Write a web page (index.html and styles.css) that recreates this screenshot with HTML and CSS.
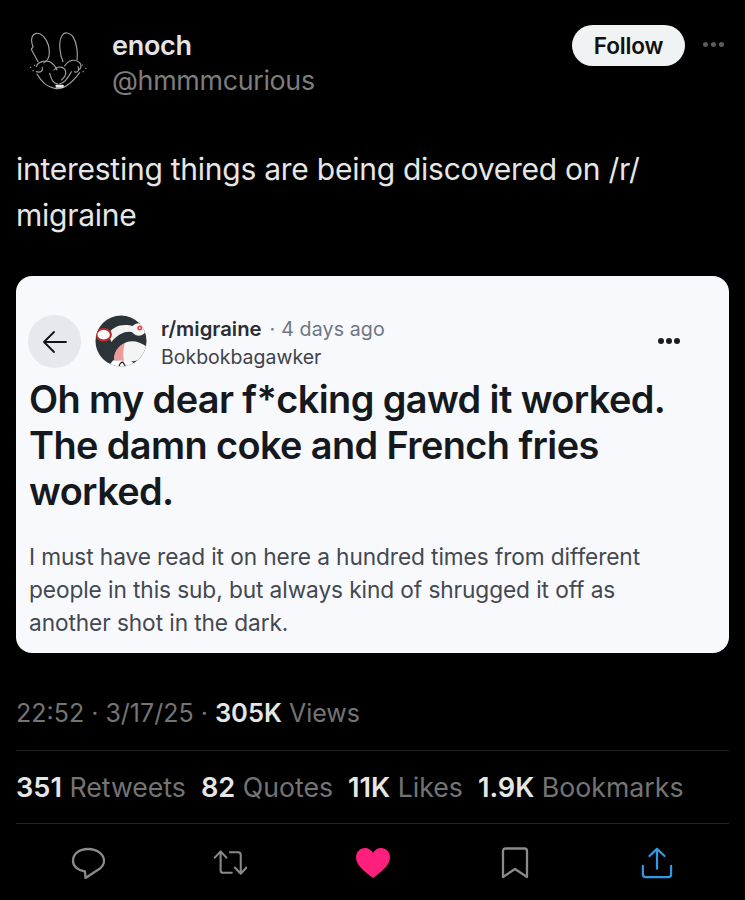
FILE: index.html
```html
<!DOCTYPE html>
<html lang="en">
<head>
<meta charset="utf-8">
<title>enoch on X</title>
<link rel="stylesheet" href="styles.css">
</head>
<body>
<main class="tweet">
  <header class="head">
    <svg class="avatar" viewBox="85 60 180 180" fill="none" stroke="#a0a0a0" stroke-width="3.500" stroke-linecap="round">
      <path d="M132 158C150 150 152 130 146 105 140 85 125 68 110 70 98 72 93 85 97 100L100 110 95 118C103 135 110 145 115 155"/>
      <path d="M190 155C180 130 175 95 188 75 195 66 210 66 220 80 232 100 235 130 232 150"/>
      <path d="M110 170C115 155 135 150 150 155 160 160 168 170 172 180"/>
      <path d="M195 168C205 150 225 145 240 158 245 165 245 172 240 178"/>
      <path d="M163 180C175 165 195 170 198 185 200 200 190 205 185 210"/>
      <path d="M110 185C125 190 130 180 128 172M225 185C235 190 240 178 235 170"/>
      <path d="M112 192C125 215 145 232 165 235 185 240 210 228 240 188"/>
      <path d="M150 190C155 210 165 222 175 222M215 185C205 205 195 218 180 222"/>
      <path d="M92 172h1M100 182h1M104 166h1M248 165h1M258 175h1M250 185h1"/>
      <rect class="tooth" x="168" y="224" width="24" height="9" rx="2"/>
    </svg>
    <div class="names">
      <div class="name">enoch</div>
      <div class="handle">@hmmmcurious</div>
    </div>
    <button class="follow" type="button">Follow</button>
    <div class="more"><i></i><i></i><i></i></div>
  </header>

  <p class="body">interesting things are being discovered on /r/<br>migraine</p>

  <article class="card">
    <div class="meta">
      <div class="back">
        <svg viewBox="0 0 24 24" fill="none" stroke="#111317" stroke-width="1.800" stroke-linecap="round" stroke-linejoin="round"><path d="M23 12H1M11 2 1 12l10 10"/></svg>
      </div>
      <svg class="sub-icon" viewBox="0 0 54 54">
        <defs><clipPath id="disc"><circle cx="27" cy="27" r="26.500"/></clipPath></defs>
        <g clip-path="url(#disc)">
          <rect width="54" height="54" fill="#2c3439"/>
          <path d="M14 20C18 11 30 8 42 12L44 20C36 15 26 17 17 28z" fill="#f2f2f2"/>
          <path d="M20 46C20 38 25 32 33 28 40 26 47 28 54 33L52 44C44 49 32 50 20 46z" fill="#f4f4f4"/>
          <path d="M20 47C19 39 24 32 31 29 29 35 29 42 30 48z" fill="#ef9a9a"/>
          <path d="M13 54L19 47 38 48 44 54z" fill="#fff"/>
          <path d="M25 53c1-3 3-4 4-4l3 5" fill="none" stroke="#222" stroke-width="1.200"/>
          <ellipse cx="9" cy="20.500" rx="7.500" ry="6" fill="#fff" stroke="#c02a2a" stroke-width="2.200"/>
          <ellipse cx="45.500" cy="15" rx="7.500" ry="6.500" fill="#f5f5f5"/>
          <circle cx="46.500" cy="13.500" r="2.600" fill="#e0474c"/>
          <circle cx="46.500" cy="13.500" r="1" fill="#f8dcdc"/>
        </g>
      </svg>
      <div class="sub-text">
        <div class="sub-line"><b>r/migraine</b><span class="dot">·</span><span class="ago">4 days ago</span></div>
        <div class="author">Bokbokbagawker</div>
      </div>
      <div class="card-more"><i></i><i></i><i></i></div>
    </div>
    <h1 class="title">Oh my dear f*cking gawd it worked. The damn coke and French fries worked.</h1>
    <p class="excerpt">I must have read it on here a hundred times from different people in this sub, but always kind of shrugged it off as another shot in the dark.</p>
  </article>

  <div class="time">22:52 · 3/17/25 · <b>305K</b> Views</div>

  <div class="stats">
    <span><b>351</b> Retweets</span>
    <span><b>82</b> Quotes</span>
    <span><b>11K</b> Likes</span>
    <span><b>1.9K</b> Bookmarks</span>
  </div>

  <footer class="actions">
    <svg class="act" viewBox="0 0 34 32" fill="none" stroke="#8a8a8a" stroke-width="2.300" stroke-linejoin="round"><path d="M17 2C26 2 33 7 33 14c0 3-1.500 5.500-4 7.500L14.500 31l-.5-6.500C7 23.500 2 19.500 2 14 2 7 8 2 17 2z"/></svg>
    <svg class="act" viewBox="0 0 38 30" fill="none" stroke="#8a8a8a" stroke-width="2.300" stroke-linecap="round" stroke-linejoin="round"><path d="M2 9l6.500-7L15 9M8.500 3v20c0 2 1 3 3 3H21M19 3h9c2 0 3 1 3 3v20M24.500 20l6.500 7 6.500-7"/></svg>
    <svg class="act" viewBox="0 0 34 30"><path fill="#ff1f7d" d="M17 30C11 25.500 0 18 0 9.500 0 4 4 0 9 0c3.500 0 6.500 2 8 5 1.500-3 4.500-5 8-5 5 0 9 4 9 9.500C34 18 23 25.500 17 30z"/></svg>
    <svg class="act" viewBox="0 0 28 32" fill="none" stroke="#8a8a8a" stroke-width="2.300" stroke-linejoin="round"><path d="M2 30V4c0-1.500 1-2.500 2.500-2.500h19C25 1.500 26 2.500 26 4v26L14 22z"/></svg>
    <svg class="act" viewBox="0 0 34 34" fill="none" stroke="#2f9be6" stroke-width="2.300" stroke-linecap="round" stroke-linejoin="round"><path d="M17 23V2M9 9.500 17 2l8 7.500M2 20v9c0 2 1 3 3 3h24c2 0 3-1 3-3v-9"/></svg>
  </footer>
</main>
</body>
</html>
```

FILE: styles.css
```css
* { box-sizing: border-box; }
html, body { margin: 0; background: #000; }
body { width: 745px; height: 900px; overflow: hidden; font-family: Inter, "Liberation Sans", sans-serif; color: #e8e8e8; }
.tweet { padding: 0 16px; }

.head { display: flex; align-items: flex-start; padding-top: 29px; height: 140px; }
.avatar { width: 60px; height: 60px; margin: 1px 0 0 12px; flex: none; }
.tooth { fill: #e8e8e8; stroke: none; }
.names { margin-left: 24px; flex: 1; }
.name { font-size: 27px; line-height: 34px; font-weight: 600; color: #e4e4e4; letter-spacing: -0.3px; }
.handle { font-size: 26.800px; line-height: 34px; color: #7d7d7d; letter-spacing: -0.3px; }
.follow { width: 113px; height: 41px; margin-top: -4px; border: 0; border-radius: 21px; background: #eff3f4; color: #111; font: 600 22.600px Inter, sans-serif; letter-spacing: -0.2px; padding: 0; }
.more { display: flex; gap: 3px; margin: 13px 5px 0 18px; }
.more i { width: 5px; height: 5px; border-radius: 50%; background: #5c5c5c; }

.body { margin: 0; font-size: 30px; line-height: 46px; height: 136px; padding-top: 6px; color: #e6e6e6; letter-spacing: -0.25px; }

.card { width: 713px; height: 377px; background: #f7f9fc; border-radius: 16px; padding: 39px 12px 0 12px; color: #1a1c20; }
.meta { display: flex; align-items: flex-start; height: 56px; }
.back { width: 53px; height: 53px; border-radius: 50%; background: #e5e9ee; display: flex; align-items: center; justify-content: center; flex: none; }
.back svg { width: 24px; height: 24px; }
.sub-icon { width: 52px; height: 52px; margin: 0 0 0 14px; flex: none; }
.sub-text { margin-left: 14px; flex: 1; }
.sub-line { font-size: 19.600px; line-height: 30px; margin-top: -1px; }
.sub-line b { font-size: 20.300px; font-weight: 600; color: #2a2d33; }
.dot { color: #6f7680; margin: 0 6px 0 8px; }
.ago { color: #6f7680; letter-spacing: .1px; }
.author { font-size: 19.500px; line-height: 24px; color: #3f4349; margin-top: 1px; }
.card-more { display: flex; gap: 2px; margin: 23px 37px 0 0; }
.card-more i { width: 6px; height: 6px; border-radius: 50%; background: #1a1c20; }

.title { margin: 5px 0 0 1px; font-size: 37.900px; line-height: 46px; font-weight: 600; color: #15181c; letter-spacing: -0.6px; }
.excerpt { margin: 26px 0 0 1px; max-width: 640px; font-size: 22.700px; line-height: 33px; color: #44484f; letter-spacing: -0.1px; }

.time { margin-top: 43px; font-size: 25px; line-height: 34px; color: #747474; }
.time b { font-size: 25.500px; }
.time b, .stats b { font-weight: 600; color: #e6e6e6; }
.stats { margin-top: 20px; height: 74px; border-top: 1px solid #222; border-bottom: 1px solid #222; display: flex; gap: 15px; align-items: center; font-size: 26.700px; color: #747474; }
.stats b { font-size: 27.200px; }
.actions { display: flex; justify-content: space-between; align-items: center; padding: 0 55px; height: 76px; margin-top: 1px; }
.act { height: 32px; width: 34px; }
```
